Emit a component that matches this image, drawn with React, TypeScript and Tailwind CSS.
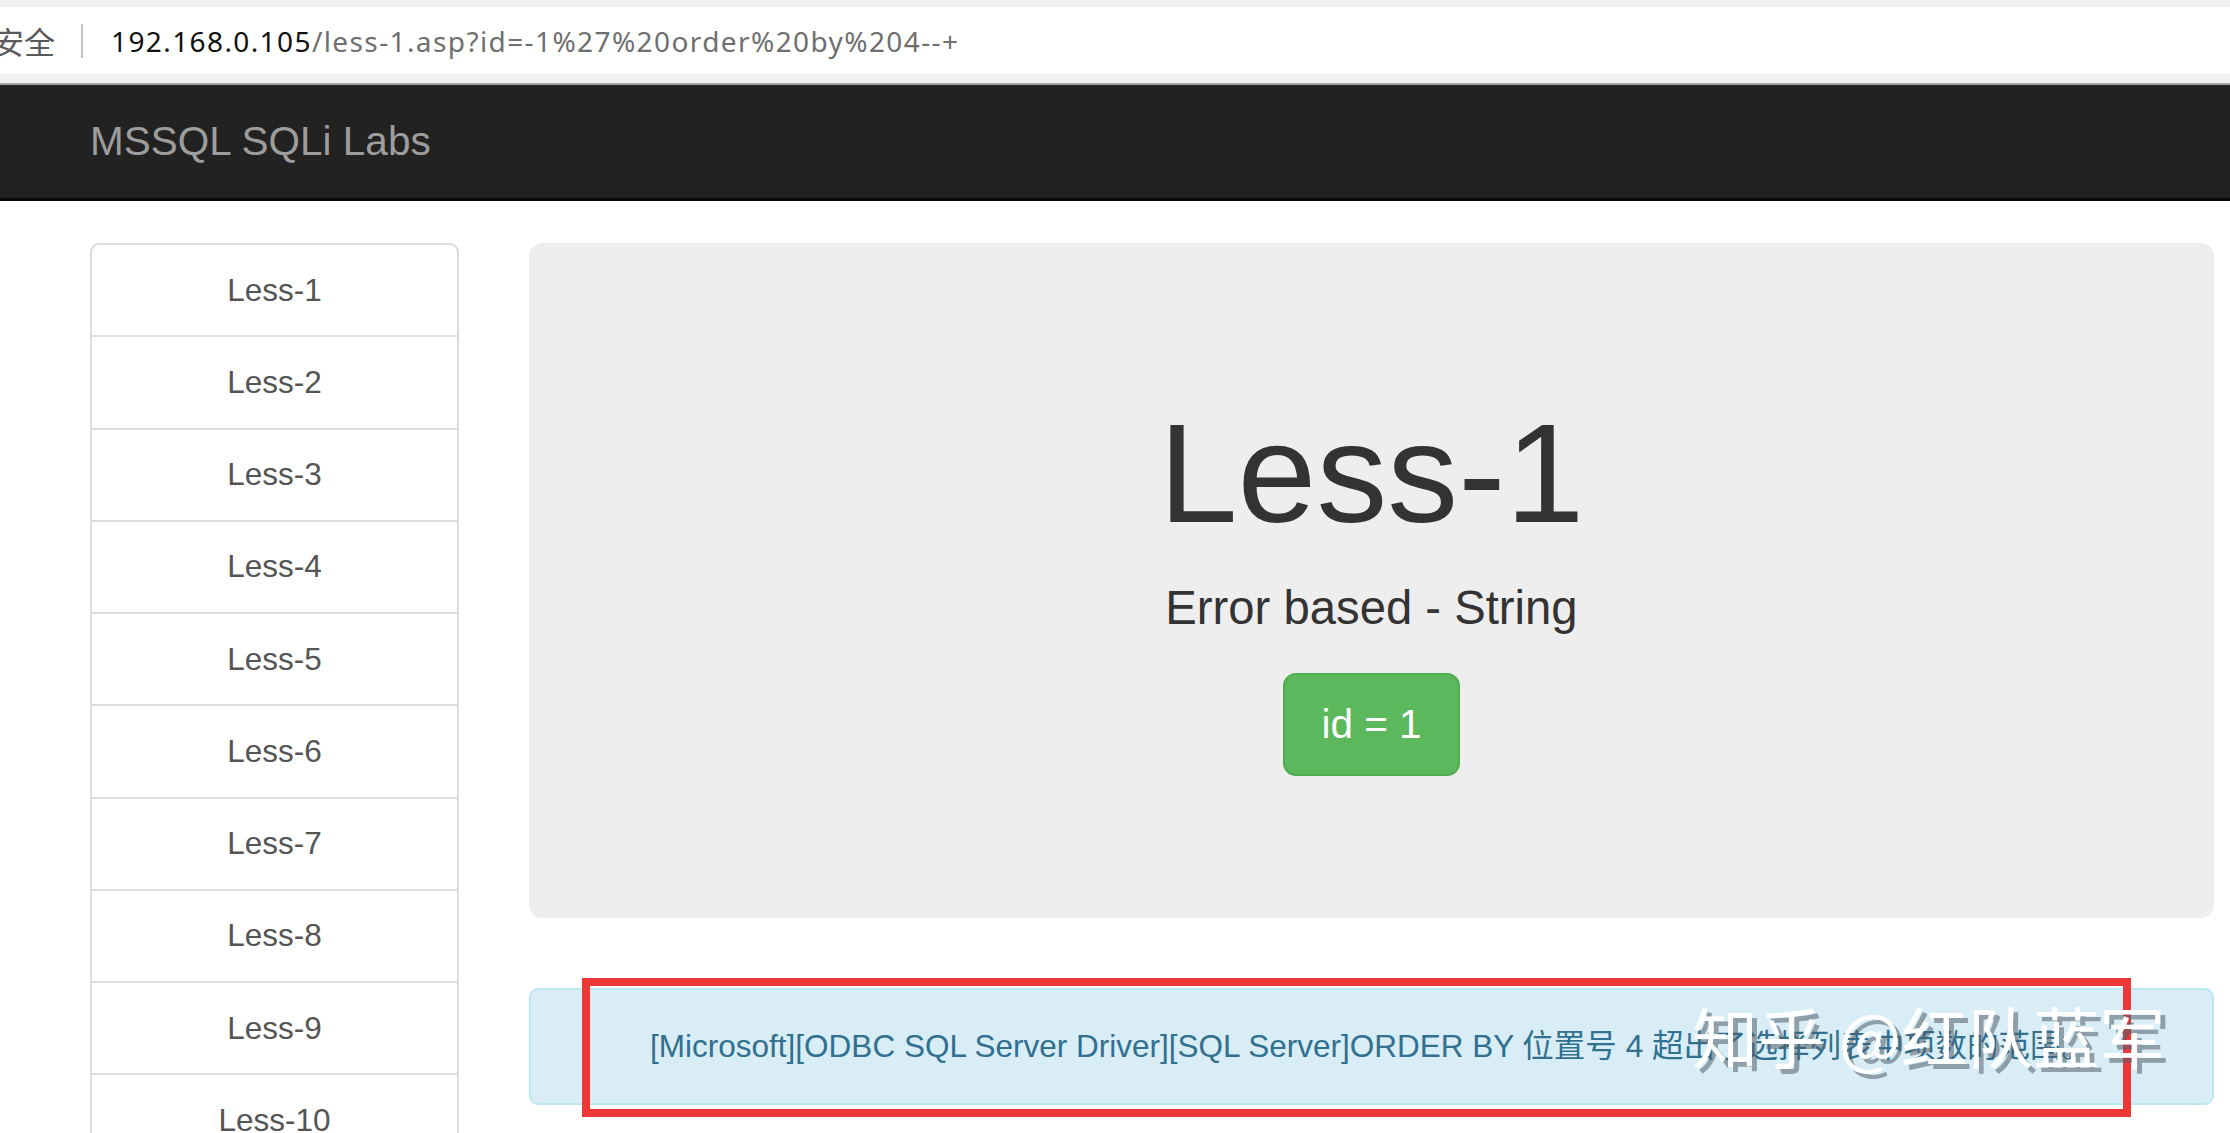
import React from 'react';

const lessons = Array.from({ length: 12 }, (_, i) => `Less-${i + 1}`);

const App: React.FC = () => {
  return (
    <div className="relative h-[1133px] w-[2230px] overflow-hidden bg-white font-['Liberation_Sans',Arial,sans-serif]">
      {/* Browser address bar */}
      <div className="h-[7px] bg-[#f1f1f1]" />
      <div className="flex h-[67px] items-center bg-white font-['Noto_Sans','Noto_Sans_CJK_SC',sans-serif]">
        <span className="-ml-[7px] font-['Noto_Sans_CJK_SC',sans-serif] text-[31px] leading-none text-[#5a5a5a]">
          安全
        </span>
        <div className="ml-[26px] h-[34px] w-[2px] bg-[#c4c4c4]" />
        <div className="ml-[28px] text-[28px] leading-none tracking-[1.4px]">
          <span className="text-[#111]">192.168.0.105</span>
          <span className="text-[#6f6f6f]">/less-1.asp?id=-1%27%20order%20by%204--+</span>
        </div>
      </div>
      <div className="h-[9px] bg-[#f1f1f1]" />
      <div className="h-[2px] bg-[#a3a3a3]" />

      {/* Navbar */}
      <div className="flex h-[116px] items-center border-b-[3px] border-[#080808] bg-[#222222] pl-[90px]">
        <span className="text-[40.5px] leading-none text-[#9d9d9d]">MSSQL SQLi Labs</span>
      </div>

      {/* Body */}
      <div className="mt-[42px] flex gap-[70px] pl-[90px] pr-[16px]">
        {/* Sidebar */}
        <div className="w-[369px] shrink-0">
          <div className="rounded-t-[9px] border-x-2 border-t-2 border-[#dddddd]">
            {lessons.map((l) => (
              <div
                key={l}
                className="flex h-[92.25px] items-center justify-center border-b-2 border-[#dddddd] text-[31.5px] text-[#555555]"
              >
                {l}
              </div>
            ))}
          </div>
        </div>

        {/* Main */}
        <div className="flex-1">
          <div className="h-[675px] rounded-[13px] bg-[#eeeeee] pt-[108px] text-center text-[#333333]">
            <h1 className="mt-[45px] mb-[22.5px] text-[141.75px] leading-[1.1]">Less-1</h1>
            <p className="mb-[31px] text-[47.25px] leading-[67.5px]">Error based - String</p>
            <div>
              <span className="inline-block rounded-[13px] border-2 border-[#4cae4c] bg-[#5cb85c] px-[36px] py-[22.5px] text-[40.5px] leading-[54px] text-white">
                id = 1
              </span>
            </div>
          </div>

          <div className="mt-[69.5px] rounded-[9px] border-2 border-[#bce8f1] bg-[#d9edf7] py-[34px] text-center font-['Liberation_Sans','Noto_Sans_CJK_SC',sans-serif] text-[31.5px] leading-[45px] text-[#31708f]">
            [Microsoft][ODBC SQL Server Driver][SQL Server]ORDER BY 位置号 4 超出了选择列表中项数的范围。
          </div>
        </div>
      </div>

      {/* Annotation box */}
      <div className="absolute left-[582px] top-[978px] h-[139px] w-[1549px] border-[8px] border-[#ee3838]" />

      {/* Watermark */}
      <div className="absolute left-[1692px] top-[1001px] font-['Noto_Sans_CJK_SC',sans-serif] text-[66px] leading-none text-white [text-shadow:5px_5px_0_rgba(80,95,105,0.55)]">
        知乎 @红队蓝军
      </div>
    </div>
  );
};

export default App;
